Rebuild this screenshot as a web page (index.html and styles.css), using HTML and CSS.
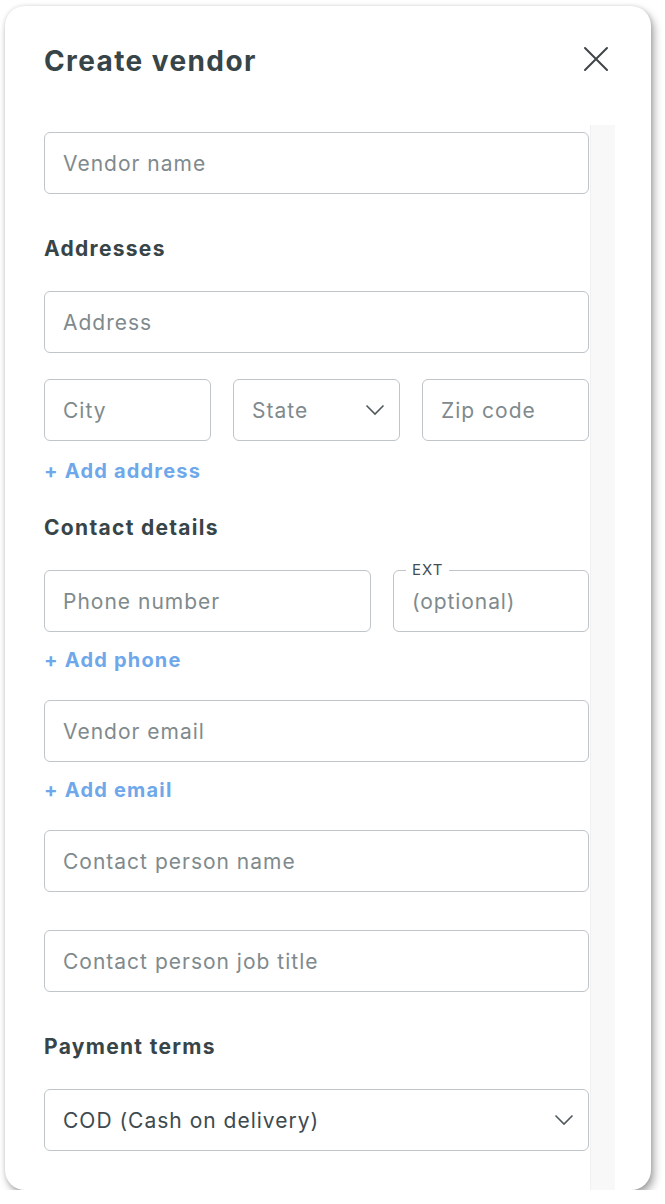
FILE: index.html
```html
<!DOCTYPE html>
<html lang="en">
<head>
    <meta charset="UTF-8">
    <meta name="viewport" content="width=device-width, initial-scale=1.0">
    <title>Create vendor</title>
    <link rel="stylesheet" href="styles.css">
</head>
<body>
    <div class="modal">
        <div class="modal-header">
            <h1 class="modal-title">Create vendor</h1>
            <button class="close-btn" aria-label="Close">
                <svg width="26" height="26" viewBox="0 0 26 26"><path d="M2 2L24 24M24 2L2 24" stroke="#3f4548" stroke-width="2" stroke-linecap="round"/></svg>
            </button>
        </div>
        <div class="modal-body">
            <form class="vendor-form">
                <input class="field" type="text" placeholder="Vendor name">

                <h2 class="section-title">Addresses</h2>
                <input class="field" type="text" placeholder="Address">
                <div class="field-row">
                    <input class="field" type="text" placeholder="City">
                    <div class="field select-box placeholder">
                        <span>State</span>
                        <svg width="20" height="12" viewBox="0 0 20 12"><path d="M1.5 1.5L10 10L18.5 1.5" fill="none" stroke="#50595c" stroke-width="1.6"/></svg>
                    </div>
                    <input class="field" type="text" placeholder="Zip code">
                </div>
                <a class="add-link address-link" href="#">+ Add address</a>

                <h2 class="section-title">Contact details</h2>
                <div class="phone-row">
                    <input class="field phone-field" type="text" placeholder="Phone number">
                    <fieldset class="ext-box">
                        <legend>EXT</legend>
                        <input type="text" placeholder="(optional)">
                    </fieldset>
                </div>
                <a class="add-link" href="#">+ Add phone</a>
                <input class="field after-link" type="text" placeholder="Vendor email">
                <a class="add-link" href="#">+ Add email</a>
                <input class="field after-link" type="text" placeholder="Contact person name">
                <input class="field job-field" type="text" placeholder="Contact person job title">

                <h2 class="section-title terms-title">Payment terms</h2>
                <div class="field select-box">
                    <span>COD (Cash on delivery)</span>
                    <svg width="20" height="12" viewBox="0 0 20 12"><path d="M1.5 1.5L10 10L18.5 1.5" fill="none" stroke="#50595c" stroke-width="1.6"/></svg>
                </div>
            </form>
            <div class="scroll-track"></div>
        </div>
    </div>
</body>
</html>
```

FILE: styles.css
```css
body {
    margin: 0;
    padding: 6px 0 0 5px;
    background-color: #ffffff;
    font-family: Inter, "Open Sans", sans-serif;
}
.modal {
    width: 646px;
    height: 1184px;
    background-color: #ffffff;
    border-radius: 20px;
    box-shadow: 3px 5px 8px rgba(0, 0, 0, 0.35), 0 0 4px rgba(0, 0, 0, 0.12);
    display: flex;
    flex-direction: column;
    overflow: hidden;
}
.modal-header {
    height: 119px;
    box-sizing: border-box;
    padding: 36px 42px 0 39px;
    display: flex;
    justify-content: space-between;
    align-items: flex-start;
}
.modal-title {
    margin: 0;
    font-size: 28px;
    line-height: 38px;
    font-weight: 700;
    letter-spacing: 1.4px;
    color: #374549;
}
.close-btn {
    background: none;
    border: none;
    padding: 0;
    margin-top: 4px;
    width: 26px;
    height: 26px;
    cursor: pointer;
}
.modal-body {
    flex-grow: 1;
    min-height: 0;
    display: flex;
    padding-left: 39px;
    padding-right: 36px;
}
.vendor-form {
    flex-grow: 1;
    display: flex;
    flex-direction: column;
    padding-top: 7px;
    padding-right: 1px;
}
.scroll-track {
    width: 25px;
    flex-shrink: 0;
    background-color: #f8f8f8;
    border-left: 1px solid #f0f0f0;
    box-sizing: border-box;
}
.field {
    height: 62px;
    box-sizing: border-box;
    border: 1px solid #bfc5c8;
    border-radius: 6px;
    padding: 0 18px;
    font-family: inherit;
    font-size: 21px;
    letter-spacing: 1px;
    color: #3d4a4f;
    background-color: #ffffff;
    outline: none;
}
.field::placeholder {
    color: #7f8a8d;
}
.section-title {
    margin: 41px 0 28px;
    font-size: 21px;
    line-height: 28px;
    font-weight: 700;
    letter-spacing: 1.3px;
    color: #374549;
}
.field-row {
    margin-top: 26px;
    display: grid;
    grid-template-columns: 1fr 1fr 1fr;
    gap: 22px;
}
.field-row .field {
    width: 100%;
    min-width: 0;
}
.select-box {
    display: flex;
    align-items: center;
    justify-content: space-between;
    padding-right: 14px;
}
.select-box.placeholder span {
    color: #7f8a8d;
}
.add-link {
    margin-top: 15px;
    font-size: 20px;
    line-height: 26px;
    font-weight: 700;
    letter-spacing: 1.2px;
    color: #6ea8ea;
    text-decoration: none;
    align-self: flex-start;
}
.add-link.address-link {
    margin-top: 17px;
}
.add-link + .section-title {
    margin-top: 30px;
}
.phone-row {
    display: flex;
    gap: 22px;
}
.phone-field {
    width: 327px;
}
.ext-box {
    flex-grow: 1;
    margin: -9px 0 0;
    padding: 0 0 0 18px;
    border: 1px solid #bfc5c8;
    border-radius: 6px;
    height: 71px;
    box-sizing: border-box;
    display: flex;
    align-items: center;
}
.ext-box legend {
    padding: 0 6px;
    margin-left: -6px;
    font-size: 15px;
    line-height: 18px;
    letter-spacing: 1px;
    color: #454d50;
}
.ext-box input {
    border: none;
    outline: none;
    width: 100%;
    padding: 0;
    margin-top: -8px;
    font-family: inherit;
    font-size: 21px;
    letter-spacing: 0.9px;
    color: #3d4a4f;
}
.ext-box input::placeholder {
    color: #7f8a8d;
}
.after-link {
    margin-top: 27px;
}
.job-field {
    margin-top: 38px;
}
.section-title.terms-title {
    margin-top: 41px;
}
```
